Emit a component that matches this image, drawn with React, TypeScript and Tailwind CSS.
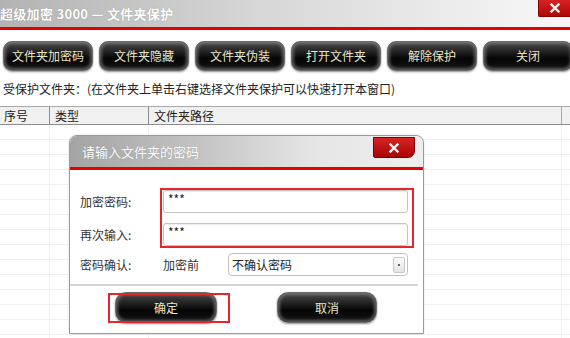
import React from "react";

const FONT = { fontFamily: '"Noto Sans CJK SC", "Noto Sans", sans-serif' };

function GlossBtn({ label, className = "" }: { label: string; className?: string }) {
  return (
    <div
      className={
        "flex items-center justify-center rounded-[9px] border border-[#6a6a6a] bg-[linear-gradient(to_bottom,#4a4a4a_0%,#1c1c1c_40%,#050505_60%,#151515_100%)] shadow-[inset_0_0_3px_2px_rgba(150,150,150,0.55),0_1px_2px_rgba(0,0,0,0.45)] text-[12px] text-[#ebe5c6] " +
        className
      }
    >
      {label}
    </div>
  );
}

function CloseX({ size = 10 }: { size?: number }) {
  return (
    <svg width={size} height={size} viewBox="0 0 10 10">
      <path d="M1.5 1.5 L8.5 8.5 M8.5 1.5 L1.5 8.5" stroke="#f4f4f4" strokeWidth="2.4" strokeLinecap="square" />
    </svg>
  );
}

export default function App() {
  const rows = Array.from({ length: 15 });
  return (
    <div className="relative w-[570px] h-[338px] overflow-hidden bg-white" style={FONT}>
      {/* title bar */}
      <div className="relative h-[27px] flex items-center bg-[linear-gradient(to_right,#b3b3b3_0%,#d6d6d6_45%,#f2f2f2_90%,#f6f6f6_100%)]">
        <span className="ml-0 text-[13px] font-bold tracking-[0.3px] text-white [text-shadow:0_0_1px_rgba(90,90,90,0.6)] leading-none whitespace-pre">
          超级加密 3000 — 文件夹保护
        </span>
        <div className="absolute right-0 top-0 w-[32px] h-[17px] flex items-center justify-center bg-[linear-gradient(to_bottom,#d82222,#b00808)] border-l border-b border-[#8a0000] rounded-bl-[2px]">
          <CloseX size={10} />
        </div>
      </div>
      <div className="h-[3px] bg-[#e60000]" />

      {/* toolbar */}
      <div className="flex gap-[6px] pl-[3px] pt-[11px]">
        {["文件夹加密码", "文件夹隐藏", "文件夹伪装", "打开文件夹", "解除保护", "关闭"].map((t) => (
          <GlossBtn key={t} label={t} className="w-[90px] h-[30px] shrink-0" />
        ))}
      </div>

      {/* label */}
      <div className="h-[35px] flex items-center pl-[3px] text-[12px] text-[#222]">
        受保护文件夹：(在文件夹上单击右键选择文件夹保护可以快速打开本窗口)
      </div>

      {/* table header */}
      <div className="flex h-[19px] border-t border-b border-t-[#a8a8a8] border-b-[#8c8c8c] bg-[#f0f0f0] text-[12px] text-[#222]">
        <div className="w-[50px] border-r border-[#8c8c8c] pl-[4px] leading-[17px]">序号</div>
        <div className="w-[99px] border-r border-[#8c8c8c] pl-[5px] leading-[17px]">类型</div>
        <div className="w-[413px] border-r border-[#a8a8a8] pl-[5px] leading-[17px]">文件夹路径</div>
        <div className="flex-1" />
      </div>

      {/* table body */}
      <div className="flex flex-col">
        {rows.map((_, i) => (
          <div key={i} className="flex h-[15px] border-b border-[#efefef] shrink-0">
            <div className="w-[50px] border-r border-[#f0f0f0]" />
            <div className="w-[99px] border-r border-[#f0f0f0]" />
            <div className="w-[413px] border-r border-[#f0f0f0]" />
            <div className="flex-1" />
          </div>
        ))}
      </div>

      {/* dialog */}
      <div className="absolute left-[69px] top-[135px] w-[355px] h-[199px] flex flex-col bg-white border border-[#9a9a9a] rounded-t-[8px] shadow-[0_0_2px_rgba(0,0,0,0.15)] overflow-hidden">
        <div className="relative h-[31px] flex items-center pl-[12px] bg-[linear-gradient(to_right,#a4a4a4_0%,#c2c2c2_35%,#e6e6e6_70%,#eeeeee_100%)]">
          <span className="text-[13px] text-white [text-shadow:0_0_1px_rgba(100,100,100,0.5)] leading-none">请输入文件夹的密码</span>
          <div className="absolute right-[8px] top-[1px] w-[42px] h-[21px] flex items-center justify-center bg-[linear-gradient(to_bottom,#d82424,#a80404)] border border-[#7e0000] rounded-br-[7px] rounded-bl-[2px]">
            <CloseX size={10} />
          </div>
        </div>
        <div className="h-[3px] bg-[#e60000]" />

        <div className="flex flex-col text-[12px] text-[#333]">
          {/* inputs */}
          <div className="flex mt-[18px]">
            <div className="w-[90px] flex flex-col pl-[10px] pt-[2px]">
              <div className="h-[23px] flex items-center">加密密码:</div>
              <div className="h-[10px]" />
              <div className="h-[23px] flex items-center">再次输入:</div>
            </div>
            <div className="w-[254px] flex flex-col gap-[10px] border-2 border-[#e3262a] pl-[1px] pr-[4px]">
              <div className="h-[23px] rounded-[3px] border border-[#c4c4c4] shadow-[inset_0_1px_1px_rgba(0,0,0,0.08)] pl-[4px] text-[12px] leading-[16px] text-[#222]">***</div>
              <div className="h-[23px] rounded-[3px] border border-[#c4c4c4] shadow-[inset_0_1px_1px_rgba(0,0,0,0.08)] pl-[4px] text-[12px] leading-[16px] text-[#222]">***</div>
            </div>
          </div>

          {/* confirm row */}
          <div className="flex items-center mt-[5px] h-[23px]">
            <div className="w-[93px] pl-[10px]">密码确认:</div>
            <div className="w-[65px]">加密前</div>
            <div className="w-[180px] h-[23px] flex items-center justify-between rounded-[4px] border border-[#c0c0c0] bg-white pl-[3px] pr-[2px] text-[#222]">
              <span>不确认密码</span>
              <div className="w-[12px] h-[16px] flex items-center justify-center border border-[#c8c8c8] rounded-[2px] bg-[linear-gradient(to_bottom,#fafafa,#e4e4e4)]">
                <div className="w-[2px] h-[2px] bg-[#666]" />
              </div>
            </div>
          </div>

          {/* separator */}
          <div className="mt-[8px] mr-[5px] h-[2px] bg-[#d4d4d4]" />

          {/* buttons */}
          <div className="relative flex mt-[6px]">
            <GlossBtn label="确定" className="ml-[45px] w-[102px] h-[31px] rounded-[11px]" />
            <GlossBtn label="取消" className="ml-[60px] w-[100px] h-[31px] rounded-[11px]" />
            <div className="absolute left-[38px] top-[1px] w-[122px] h-[30px] border-2 border-[#e3262a] pointer-events-none" />
          </div>
        </div>
      </div>
    </div>
  );
}
